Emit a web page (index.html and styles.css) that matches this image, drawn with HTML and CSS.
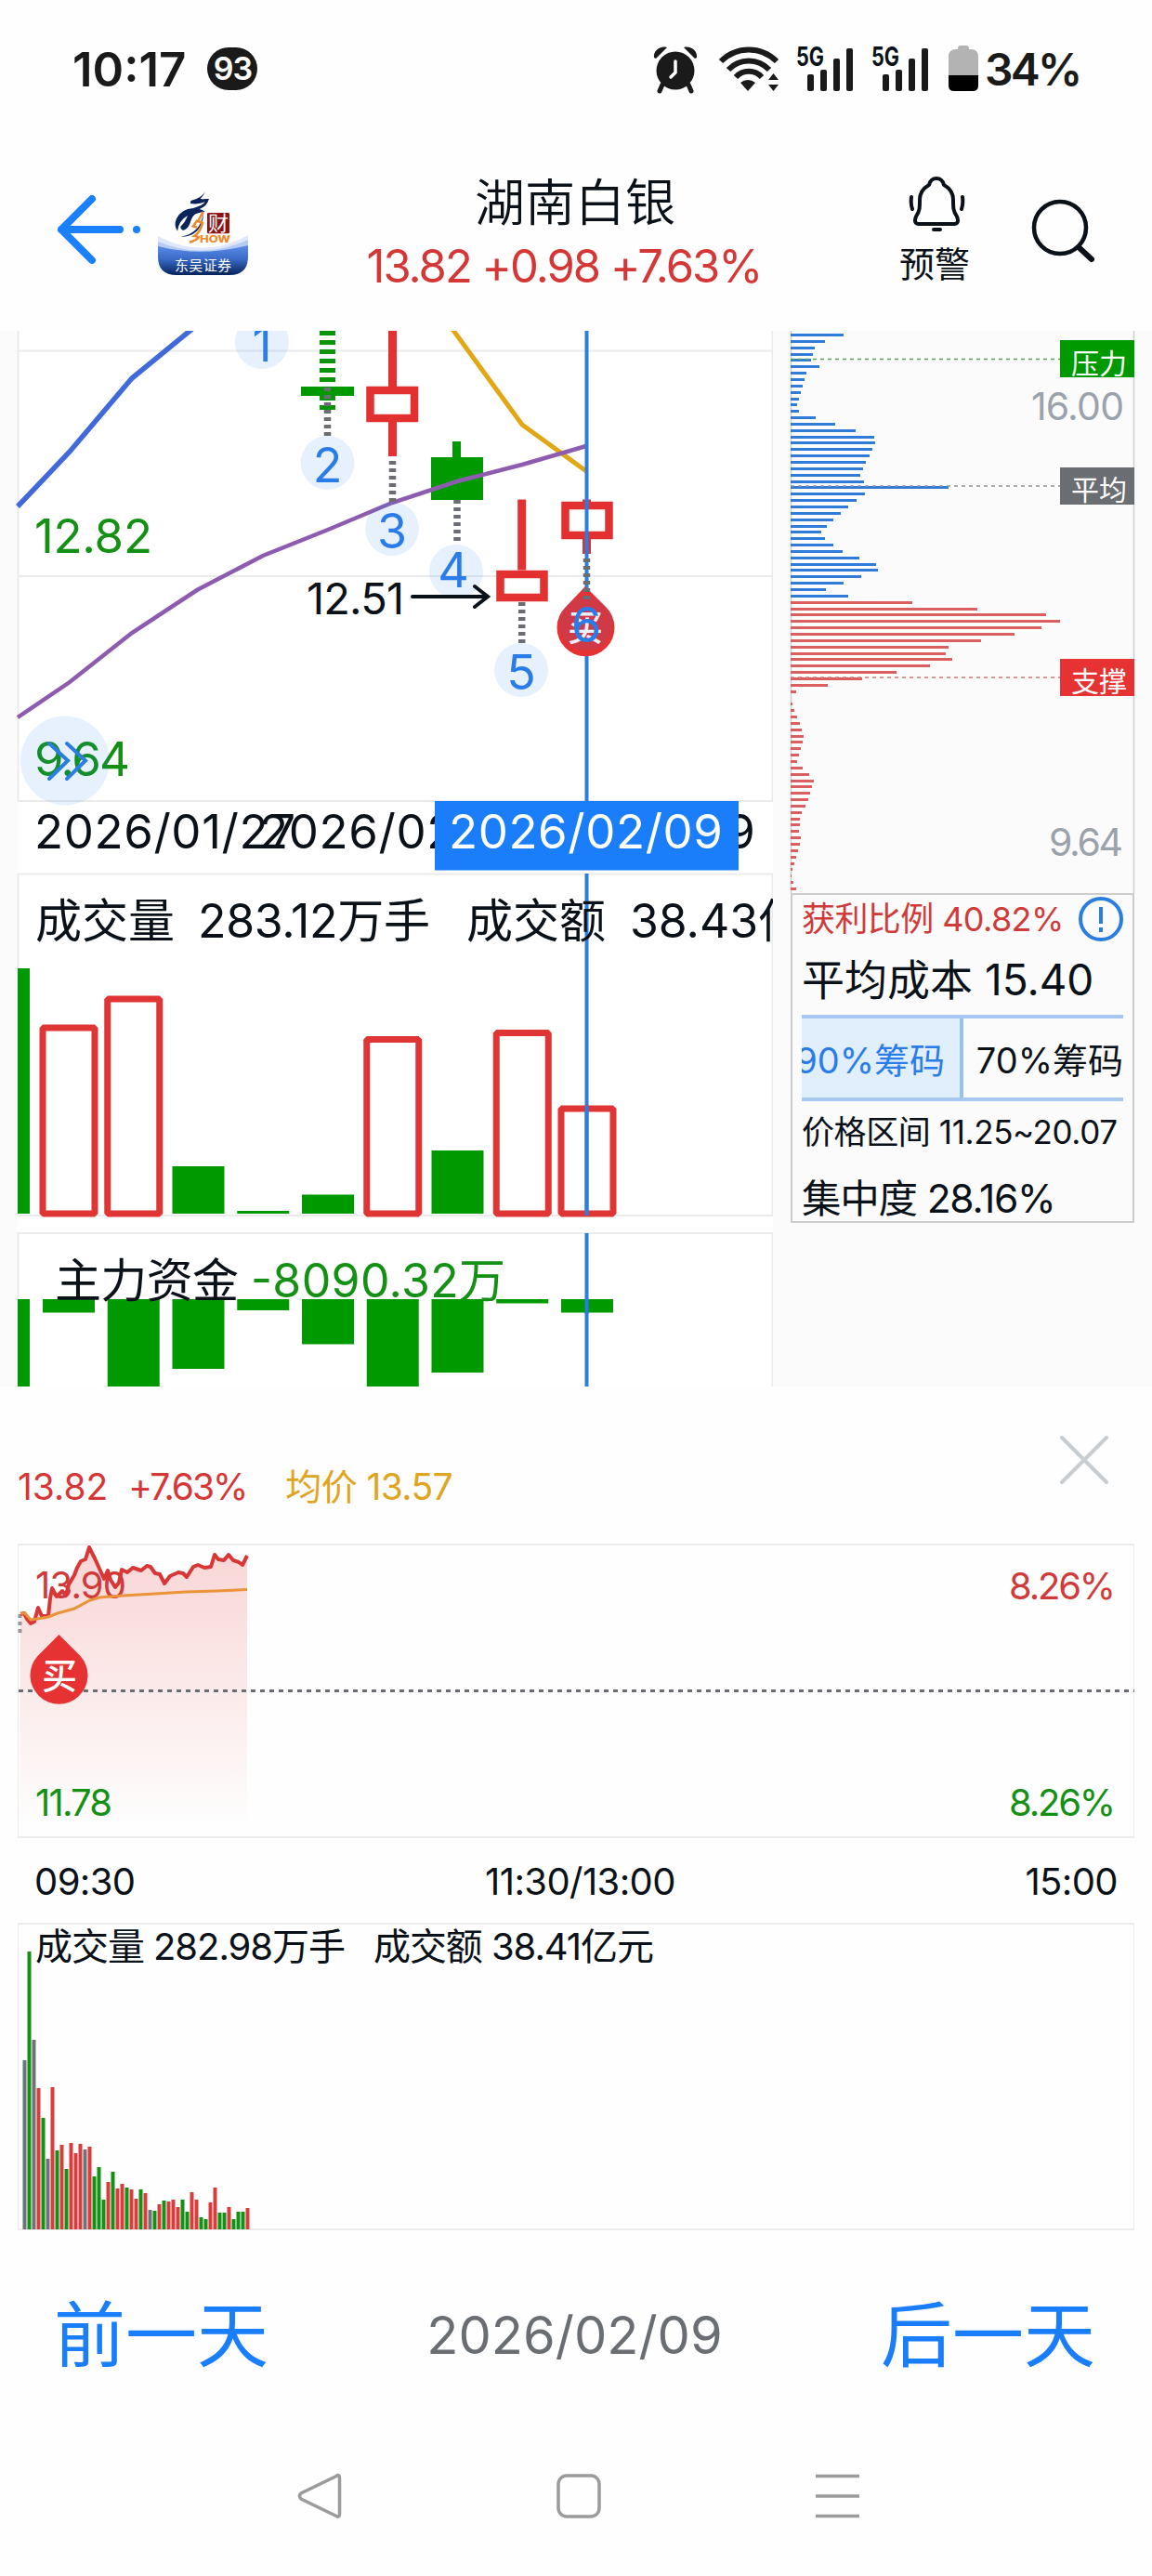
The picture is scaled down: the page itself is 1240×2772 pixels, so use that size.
FILE: index.html
```html
<!DOCTYPE html>
<html lang="zh-CN">
<head>
    <meta charset="UTF-8">
    <meta name="viewport" content="width=device-width, initial-scale=1.0">
    <title>湖南白银</title>
    <link rel="stylesheet" href="styles.css">
</head>
<body>
    <div class="status-bar">
        <span class="clock">10:17</span>
        <span class="badge">93</span>
        <svg class="status-icons" width="360" height="56" viewBox="700 45 360 56">
            <g fill="#1a1a1a">
                <ellipse cx="727" cy="75" rx="20.5" ry="20.5"/>
                <path d="M704 61c-1-7 6-13 14-11l-12 12zM750 61c1-7-6-13-14-11l12 12z"/>
                <path d="M713 90l-3 7M741 90l3 7" stroke="#1a1a1a" stroke-width="5" stroke-linecap="round"/>
                <path d="M727 65v12l-5 5" fill="none" stroke="#fff" stroke-width="3.500" stroke-linecap="round"/>
                <path d="M776 65a42 42 0 0 1 60 0M784 74a30 30 0 0 1 44 0M792 82a19 19 0 0 1 28 0" fill="none" stroke="#1a1a1a" stroke-width="6"/>
                <path d="M797 88a12 12 0 0 1 16 0l-8 9z"/>
                <path d="M827 85l5.500-7 5.500 7zM827 90l5.500 7 5.500-7z"/>
            </g>
            <g id="signal" fill="#1a1a1a">
                <text class="net" x="857" y="70" textLength="30" lengthAdjust="spacingAndGlyphs">5G</text>
                <rect x="869" y="79" width="7" height="18" rx="2"/>
                <rect x="883" y="74" width="7" height="23" rx="2"/>
                <rect x="897" y="62" width="7" height="35" rx="2"/>
                <rect x="911" y="51" width="7" height="46" rx="2"/>
            </g>
            <use href="#signal" x="81"/>
            <path d="M1031 51q0-3 3-3h6q3 0 3 3v1h2q8 0 8 8v20h-32v-20q0-8 8-8h2z" fill="#b3b3b3"/>
            <path d="M1021 80h32v11q0 6-6 6h-20q-6 0-6-6z" fill="#000"/>
        </svg>
        <span class="percent">34%</span>
    </div>

    <header class="header">
        <svg class="back" width="92" height="80" viewBox="60 207 92 80">
            <path d="M99 214L66 247l33 33M66 247h63" fill="none" stroke="#1a80ff" stroke-width="8" stroke-linecap="round" stroke-linejoin="round"/>
            <circle cx="147" cy="247" r="4" fill="#1a80ff"/>
        </svg>
        <svg class="app-logo" width="97" height="97" viewBox="170 199 97 97">
            <defs>
                <linearGradient id="band" x1="0" y1="0" x2="0" y2="1">
                    <stop offset="0" stop-color="#5c8ce6"/>
                    <stop offset=".45" stop-color="#3a6cc8"/>
                    <stop offset="1" stop-color="#06245c"/>
                </linearGradient>
            </defs>
            <path d="M170 254q48 26 97-1v24h-97z" fill="#dfe8fa"/>
            <path d="M170 260q48 20 97-2v20h-97z" fill="#b4ccf3"/>
            <path d="M170 265q48 12 97-1v12q0 20-20 20h-57q-20 0-20-20z" fill="url(#band)"/>
            <g transform="translate(160 190) scale(.3333)">
                <g fill="#0b2459">
                    <path d="M183 48q-12 22-47 30l-1 9q25 4 47-5q-8 12-38 20q-38 2-54 34q-10 22 3 40q4-34 33-50q-8 22-23 35q0 12 11 12q16-6 22-30q6-16 15-22q14-6 31-8q-8-6-18-8q24-8 31-33l-12 0q-8 2-16-1q10-8 16-23z"/>
                    <path d="M176 116q-6 66-72 78q48 2 66-40q8-20 6-38z"/>
                </g>
                <path d="M176 114l-16 30l14 6q-8 30-26 42q14 2 14 4q-12 12-30 16M158 140l-14 20l12 4" fill="none" stroke="#ea8b2d" stroke-width="8"/>
                <rect x="189" y="117" width="72" height="67" rx="4" fill="#8c1414"/>
            </g>
            <text class="seal" x="224" y="248">财</text>
            <text class="how" x="215" y="261" textLength="33" lengthAdjust="spacingAndGlyphs">HOW</text>
            <text class="broker" x="188" y="291" textLength="61">东吴证券</text>
        </svg>
        <div class="stock">
            <h1>湖南白银</h1>
            <p class="quote">13.82 +0.98 +7.63%</p>
        </div>
        <div class="alert">
            <svg width="62" height="62" viewBox="977 188 62 62" fill="none" stroke="#0a1118" stroke-width="4" stroke-linecap="round" stroke-linejoin="round">
                <path d="M1008 192c-5 0-7 3-8 7-7 4-10 9-10 16 0 9 0 12-4 18-2 5-1 8 3 8h38c4 0 5-3 3-8-4-6-4-9-4-18 0-7-3-12-10-16-1-4-3-7-8-7z"/>
                <path d="M981 212q-1 7 1 13M1036 212q1 7-1 13M1005 247h7"/>
            </svg>
            <span>预警</span>
        </div>
        <svg class="search" width="70" height="70" viewBox="1109 213 70 70" fill="none" stroke="#0a1118" stroke-linecap="round">
            <circle cx="1141" cy="245" r="28" stroke-width="4.500"/>
            <path d="M1161 266l14 13" stroke-width="6"/>
        </svg>
    </header>

    <main class="charts">
        <svg class="kline" width="832" height="1136" viewBox="0 356 832 1136">
            <rect x="19" y="356" width="813" height="1136" fill="#fff"/>
            <g class="grid">
                <path d="M19 377.500h813M19 620h813M19 862h813M19 940.500h813M19 1308h813M19 1327h813"/>
                <path d="M19.500 356v506M831.500 356v506M19.500 940v368M831.500 940v368M19.500 1327v165M831.500 1327v165"/>
            </g>

            <!-- candles -->
            <path d="M352.500 356v85" stroke="#0a940a" stroke-width="17" stroke-dasharray="5 5"/>
            <rect x="324" y="416" width="57" height="10" class="fall"/>
            <path d="M422.500 356v60M422.500 454v37M561.700 537.500v76M631.500 537.500v4M631.500 580v16" stroke="#e33030" stroke-width="9"/>
            <path d="M398.500 420h47.500v30h-47.500zM538.500 618h47v25h-47zM608.500 544h47v32h-47z" class="rise"/>
            <path d="M487 475h9v17h24v46h-56v-46h23z" class="fall"/>

            <!-- moving averages -->
            <polyline points="19,545 75,486 142,407 208,353" class="ma" stroke="#4169d9" stroke-width="5.500"/>
            <polyline points="484,350 562,457 631,507" class="ma" stroke="#e2a714" stroke-width="5"/>
            <polyline points="19,772 75,734 142,681 212,635 283,598 353,570 422,541 492,518 562,500 631,480" class="ma" stroke="#8d5cb0" stroke-width="4.500"/>

            <path d="M631.500 356v506M631.500 940v368M631.500 1327v165" stroke="#2a7de1" stroke-width="4"/>

            <!-- buy point -->
            <path d="M630 631l22 22a31 31 0 1 1-43 0z" fill="#e63232"/>
            <text class="buy" x="611" y="689">买</text>

            <g stroke="#6a6e73" stroke-width="7.500" stroke-dasharray="4 4">
                <path d="M352.500 417v53M422.500 496v46M492 538v48M561.700 648v45M631.500 601v45"/>
            </g>
            <g class="count">
                <circle cx="282" cy="368" r="29"/><text x="282" y="389">1</text>
                <circle cx="352.500" cy="498" r="29"/><text x="352.500" y="519">2</text>
                <circle cx="422" cy="569" r="29"/><text x="422" y="590">3</text>
                <circle cx="491" cy="615" r="29"/><text x="488" y="632">4</text>
                <circle cx="561" cy="721" r="29"/><text x="561" y="742">5</text>
                <circle cx="631" cy="671" r="29"/><text x="631" y="691">6</text>
            </g>

            <text x="330" y="661" font-size="47" textLength="105">12.51</text>
            <path d="M444 642h80M511 631l14 11l-14 11" fill="none" stroke="#0a1118" stroke-width="4" stroke-linecap="round"/>
            <text x="37" y="594.500" font-size="51" textLength="127" class="green">12.82</text>
            <text x="37" y="835" font-size="51" textLength="103" class="green">9.64</text>
            <circle cx="70" cy="818.500" r="48" class="more"/>
            <path d="M53 800l20 18.500l-20 19.500M72 800l20 18.500l-20 19.500" fill="none" stroke="#2a7de1" stroke-width="4" stroke-linecap="round"/>

            <text x="37" y="913" font-size="51" textLength="281">2026/01/27</text>
            <text x="279" y="913" font-size="51" textLength="295">2026/02/02</text>
            <text x="518" y="913" font-size="51" textLength="295">2026/02/09</text>
            <rect x="468" y="862" width="327" height="74.500" fill="#1a7dfa"/>
            <text x="483" y="913" font-size="51" textLength="295" fill="#fff">2026/02/09</text>

            <text x="38" y="1009" class="cjk">成交量</text>
            <text x="213" y="1009" class="cjk" textLength="250">283.12万手</text>
            <text x="502" y="1009" class="cjk">成交额</text>
            <text x="678" y="1009" class="cjk" textLength="188">38.43亿</text>

            <g id="volume"></g>
            <g id="funds"></g>
            <path d="M631.500 1190v118M631.500 1398v16" stroke="#2a7de1" stroke-width="4"/>
            <text x="59" y="1396" class="cjk" textLength="198">主力资金</text>
            <text x="270" y="1396" class="cjk green" textLength="274">-8090.32万</text>
        </svg>

        <aside class="chips">
            <svg width="408" height="605" viewBox="832 356 408 605">
                <path d="M851.500 356v605M1220.500 356v605" stroke="#cccfd2" stroke-width="1.500"/>
                <g id="chip-bars"></g>
                <g stroke-width="1.500" stroke-dasharray="4 4" fill="none">
                    <path d="M851 386.500h290" stroke="#55a055"/>
                    <path d="M851 523h290" stroke="#909396"/>
                    <path d="M851 729h290" stroke="#dd7070"/>
                </g>
                <rect x="1141" y="366" width="80" height="40" fill="#090"/>
                <rect x="1141" y="503" width="80" height="40" fill="#6a6e73"/>
                <rect x="1141" y="709" width="80" height="40" fill="#e63232"/>
                <g font-size="30" fill="#fff">
                    <text x="1153" y="402">压力</text>
                    <text x="1153" y="538">平均</text>
                    <text x="1153" y="744">支撑</text>
                </g>
                <g font-size="41" fill="#9aa2ab">
                    <text x="1110" y="452" textLength="100">16.00</text>
                    <text x="1129" y="921" textLength="80">9.64</text>
                </g>
            </svg>
            <div class="chip-info">
                <div class="row profit"><span>获利比例 40.82%</span>
                    <svg width="48" height="48" viewBox="0 0 48 48" fill="none" stroke="#2a7de1" stroke-width="4"><circle cx="24" cy="24" r="22"/><path d="M24 11v18M24 33v5"/></svg>
                </div>
                <div class="row cost">平均成本 15.40</div>
                <div class="tabs">
                    <div class="tab active"><span>90%筹码</span></div>
                    <div class="tab"><span>70%筹码</span></div>
                </div>
                <div class="row range">价格区间 11.25~20.07</div>
                <div class="row focus">集中度 28.16%</div>
            </div>
        </aside>
    </main>

    <section class="intraday">
        <div class="legend">
            <span>13.82</span>
            <span class="pct">+7.63%</span>
            <span class="avg">均价 13.57</span>
            <svg class="close" width="56" height="56" viewBox="0 0 56 56"><path d="M4 4l48 48M52 4L4 52" stroke="#c8cdd2" stroke-width="4" stroke-linecap="round"/></svg>
        </div>
        <svg class="trend" width="1202" height="317" viewBox="19 1661 1202 317">
            <defs>
                <linearGradient id="fade" gradientUnits="userSpaceOnUse" x1="0" y1="1665" x2="0" y2="1965">
                    <stop offset="0" stop-color="#e63232" stop-opacity=".2"/>
                    <stop offset="1" stop-color="#e63232" stop-opacity="0"/>
                </linearGradient>
            </defs>
            <path d="M19 1662h1202M19 1977h1202" stroke="#ebebeb" stroke-width="2"/>
            <path d="M19.500 1662v315M1220.500 1662v315" stroke="#ebebeb"/>
            <polygon id="price-area" fill="url(#fade)"/>
            <path d="M20 1819.500h1201" stroke="#6a6e73" stroke-width="3" stroke-dasharray="5 5"/>
            <path d="M21.500 1737v20" stroke="#999" stroke-width="4" stroke-dasharray="4 4"/>
            <text x="38" y="1720" class="red" textLength="98">13.90</text>
            <text x="38" y="1953.500" class="green" textLength="83">11.78</text>
            <text x="1086" y="1720.500" class="red" textLength="115">8.26%</text>
            <text x="1086" y="1953.500" class="green" textLength="115">8.26%</text>
            <polyline id="price-line" fill="none" stroke="#d93636" stroke-width="4" stroke-linejoin="round"/>
            <polyline id="avg-line" fill="none" stroke="#ea943a" stroke-width="3"/>
            <path d="M63.500 1759l23 23a31 31 0 1 1-46 0z" fill="#e63232"/>
            <text class="buy" x="45" y="1817">买</text>
        </svg>
        <div class="times">
            <span>09:30</span><span>11:30/13:00</span><span>15:00</span>
        </div>
        <svg class="minute-volume" width="1202" height="331" viewBox="19 2069 1202 331">
            <path d="M19 2070h1202M19 2399h1202" stroke="#ebebeb" stroke-width="2"/>
            <path d="M19.500 2070v329M1220.500 2070v329" stroke="#ebebeb"/>
            <g id="minute-bars"></g>
            <text x="38" y="2109" textLength="334">成交量 282.98万手</text>
            <text x="402" y="2109" textLength="302">成交额 38.41亿元</text>
        </svg>
    </section>

    <nav class="day-switch">
        <a>前一天</a>
        <span>2026/02/09</span>
        <a>后一天</a>
    </nav>

    <div class="system-nav">
        <svg width="48" height="50" viewBox="0 0 48 50"><path d="M42 3.500q3.500-2.500 3.500 2v39q0 4-3.500 2L4 28q-3-3 0-6z"/></svg>
        <svg width="48" height="50" viewBox="0 0 48 50"><rect x="2" y="3" width="44" height="44" rx="9"/></svg>
        <svg width="48" height="50" viewBox="0 0 48 50"><path d="M0 3.500h47M0 25h47M0 46.500h47"/></svg>
    </div>

    <script>
        const NS = 'http://www.w3.org/2000/svg';
        const RED = '#d93c3c', GREEN = '#149014', GRAY = '#6f7276';

        function rect(parent, x, y, w, h, fill) {
            const el = document.createElementNS(NS, 'rect');
            el.setAttribute('x', x);
            el.setAttribute('y', y);
            el.setAttribute('width', w);
            el.setAttribute('height', h);
            el.setAttribute('fill', fill);
            parent.appendChild(el);
            return el;
        }

        // daily volume: [top, rising]
        const volume = document.getElementById('volume');
        const days = [[1106, 1], [1075, 1], [1255, 0], [1303, 0], [1285.5, 0], [1118.5, 1], [1238, 0], [1111.5, 1], [1193, 1]];
        rect(volume, 19, 1042, 13, 264, '#009900');
        days.forEach(([top, up], i) => {
            const el = rect(volume, 46 + i * 69.75, top, 56, 1306 - top, up ? 'none' : '#009900');
            if (up) el.setAttribute('class', 'rise-volume');
        });

        // main funds flow
        const funds = document.getElementById('funds');
        rect(funds, 19, 1398, 13, 94, '#009900');
        [1412.5, 1492, 1473, 1410, 1446.5, 1492, 1477, 1402.5, 1412.5].forEach((bottom, i) => {
            rect(funds, 46 + i * 69.75, 1398, 56, bottom - 1398, '#009900');
        });

        // chip distribution
        const chipBars = document.getElementById('chip-bars');
        const chips = [57, 37, 26, 24, 22, 31, 17, 15, 13, 11, 9, 7, 9, 27, 48, 70, 90, 91, 88, 85, 81, 78, 75, 79, 170, 80, 71, 62, 54, 46,
            39, 33, 37, 46, 56, 74, 92, 94, 76, 57, 38, 62, 131, 201, 275, 290, 270, 241, 205, 170, 167, 174, 150, 114, 77, 40, 6, 0,
            2, 4, 7, 10, 12, 14, 13, 11, 9, 7, 13, 20, 25, 23, 21, 19, 16, 12, 10, 10, 9, 11, 10, 8, 6, 4, 2, 1, 3, 6];
        chips.forEach((w, i) => {
            rect(chipBars, 851, Math.round(359 + i * 6.85), w, 3, i < 42 ? '#2e7bd9' : '#dc5f5f');
        });

        // minute volume: height + colour letter
        const minuteBars = document.getElementById('minute-bars');
        const minutes = ('182n 299g 204n 152r 120g 76n 153r 85g 91r 65g 93r 82r 92r 86n 89r 57g 67g 32g 51r 62g 44r 49r 45g 43r 33r 43g 39r ' +
            '21n 20g 27r 31g 30r 32r 24r 32g 19g 40r 32r 13g 11g 29r 45r 18g 18g 24r 11g 19g 19g 23r').split(' ');
        minutes.forEach((m, i) => {
            const h = parseInt(m);
            rect(minuteBars, 24.5 + i * 5, 2399 - h, 4, h, { r: RED, g: GREEN, n: GRAY }[m.slice(-1)]);
        });

        const price = [22,1737, 26,1736, 29,1742, 33,1747, 37,1745, 41,1730, 45,1739, 52,1739, 54,1720, 56,1709, 61,1718, 67,1712, 71,1717, 74,1705,
            80,1695, 83,1687, 87,1680, 92,1678, 96,1665, 102,1677, 107,1688, 112,1699, 116,1690, 119,1700, 124,1708, 128,1703, 131,1689, 137,1692,
            143,1687, 152,1690, 158,1685, 162,1686, 167,1693, 172,1694, 177,1704, 183,1696, 192,1692, 197,1693, 201,1697, 208,1686, 213,1684,
            220,1687, 227,1686, 231,1673, 235,1678, 241,1679, 246,1673, 251,1679, 257,1681, 261,1684, 266,1674];
        document.getElementById('price-line').setAttribute('points', price.join(' '));
        document.getElementById('price-area').setAttribute('points', '21,1965 ' + price.join(' ') + ' 266,1965');
        document.getElementById('avg-line').setAttribute('points',
            '22,1736 27,1736 33,1743 40,1742 52,1740 62,1736 80,1731 97,1722 107,1719 133,1717 167,1715 200,1713 233,1712 266,1710.5');
    </script>
</body>
</html>
```

FILE: styles.css
```css
* {
    margin: 0;
    padding: 0;
    box-sizing: border-box;
}
body {
    width: 1240px;
    height: 2772px;
    background: #fefefe;
    color: #0a1118;
    font-family: Inter, "Noto Sans CJK SC", sans-serif;
    font-weight: 390;
    overflow: hidden;
}
svg {
    display: block;
    flex: none;
}
text {
    fill: #0a1118;
    font-size: 40px;
}
text[fill="#fff"], [fill="#fff"] text {
    fill: #fff;
}
.red { fill: #cf3b3b; }
.green { fill: #149014; }

/* status bar */
.status-bar {
    display: flex;
    align-items: center;
    height: 148px;
    padding: 0 76px 0 78px;
    color: #1a1a1a;
    font-weight: 600;
}
.clock {
    font-size: 51px;
}
.badge {
    width: 54px;
    height: 46px;
    margin-left: 23px;
    border-radius: 23px;
    background: #1a1a1a;
    color: #fff;
    font-size: 34px;
    line-height: 46px;
    text-align: center;
    letter-spacing: -1px;
}
.status-icons {
    margin-left: auto;
    overflow: visible;
}
.net {
    font-size: 28px;
    font-weight: 700;
}
.percent {
    width: 104px;
    font-size: 48px;
    letter-spacing: -2.7px;
}

/* header */
.header {
    display: flex;
    height: 208px;
}
.back { margin: 59px 0 0 60px; }
.app-logo { margin: 51px 0 0 18px; }
.seal {
    fill: #fff;
    font-size: 22px;
}
.how {
    fill: #ea8b2d;
    font-size: 10px;
    font-weight: 800;
}
.broker {
    fill: #fff;
    font-size: 15px;
}
.stock {
    width: 680px;
    padding-top: 31px;
    text-align: center;
}
.stock h1 {
    padding-left: 24px;
    font-size: 54px;
    font-weight: 350;
    line-height: 80px;
}
.quote {
    color: #d53737;
    font-size: 49px;
    line-height: 56px;
    letter-spacing: -2px;
}
.alert {
    width: 76px;
    margin-left: 21px;
    padding-top: 40px;
}
.alert svg {
    margin-left: 9px;
}
.alert span {
    display: block;
    margin-top: 9px;
    font-size: 38px;
    line-height: 50px;
}
.search { margin: 65px 0 0 65px; }

/* k-line and chip panel */
.charts {
    display: flex;
    height: 1136px;
    background: #fbfbfb;
}
.grid path {
    stroke: #ebebeb;
    stroke-width: 2;
}
.fall { fill: #009900; }
.rise {
    fill: #fff;
    stroke: #e33030;
    stroke-width: 8.5;
}
.rise-volume {
    stroke: #df3535;
    stroke-width: 7;
    stroke-linejoin: bevel;
}
.ma { fill: none; }
.count circle, .more {
    fill: #1a80ee;
    fill-opacity: .11;
}
.count text {
    fill: #2a7de8;
    font-size: 52px;
    text-anchor: middle;
}
.buy {
    fill: #fff;
    font-size: 38px;
    font-weight: 500;
}
text[font-size="47"] { font-size: 47px; }
text[font-size="51"] { font-size: 51px; }
.cjk { font-size: 50px; }
text.green { fill: #149014; }
text.red { fill: #cf3b3b; }
[font-size="30"] text { font-size: 30px; }
[font-size="41"] text {
    font-size: 41px;
    fill: #9aa2ab;
}
.chips {
    width: 408px;
}
.chip-info {
    width: 370px;
    height: 355px;
    margin-left: 19px;
    padding: 0 10px;
    border: 2px solid #ccc;
    white-space: nowrap;
}
.row {
    display: flex;
    align-items: center;
    justify-content: space-between;
}
.profit {
    height: 51px;
    color: #cf3b3b;
    font-size: 36px;
    letter-spacing: -.6px;
}
.profit span {
    margin-top: -5px;
}
.cost {
    height: 78px;
    padding-bottom: 5px;
    font-size: 46px;
}
.tabs {
    display: flex;
    height: 93px;
    border-top: 4px solid #a6c7f0;
    border-bottom: 4px solid #a6c7f0;
    overflow: hidden;
}
.tab {
    display: flex;
    flex: 1;
    align-items: center;
    justify-content: flex-end;
    font-size: 38px;
}
.tab.active {
    flex: 0 0 174px;
    min-width: 0;
    background: #e1eefb;
    border-right: 4px solid #98c0f0;
    color: #2a7de8;
    padding-right: 16px;
}
.range {
    height: 66px;
    padding-bottom: 5px;
    font-size: 35px;
    letter-spacing: -.4px;
}
.focus {
    height: 70px;
    font-size: 42.5px;
    letter-spacing: -1.2px;
}

/* intraday */
.intraday {
    padding: 0 19px;
}
.legend {
    display: flex;
    height: 169px;
    padding: 84px 0 0 0;
    color: #d53737;
    font-size: 39px;
    line-height: 47px;
    position: relative;
}
.pct {
    margin-left: 22px;
    letter-spacing: -2px;
}
.avg {
    margin-left: 42px;
    color: #dfa51e;
    letter-spacing: -.6px;
}
.close {
    position: absolute;
    right: 26px;
    top: 51px;
}
.times {
    display: flex;
    justify-content: space-between;
    align-items: center;
    height: 91px;
    padding: 2px 18px 0 18px;
    font-size: 40px;
    letter-spacing: -.6px;
}

/* bottom */
.day-switch {
    display: flex;
    justify-content: space-between;
    align-items: center;
    height: 226px;
    padding: 0 61px 0 58px;
}
.day-switch a {
    margin-top: -12px;
    color: #1a7dfa;
    font-size: 77px;
    font-weight: 400;
}
.day-switch span {
    color: #6a6e73;
    font-size: 56px;
}
.system-nav {
    display: flex;
    justify-content: center;
    gap: 231px;
    padding: 35px 0 0 6px;
}
.system-nav svg {
    fill: none;
    stroke: #9b9b9b;
    stroke-width: 3.5;
}
```
